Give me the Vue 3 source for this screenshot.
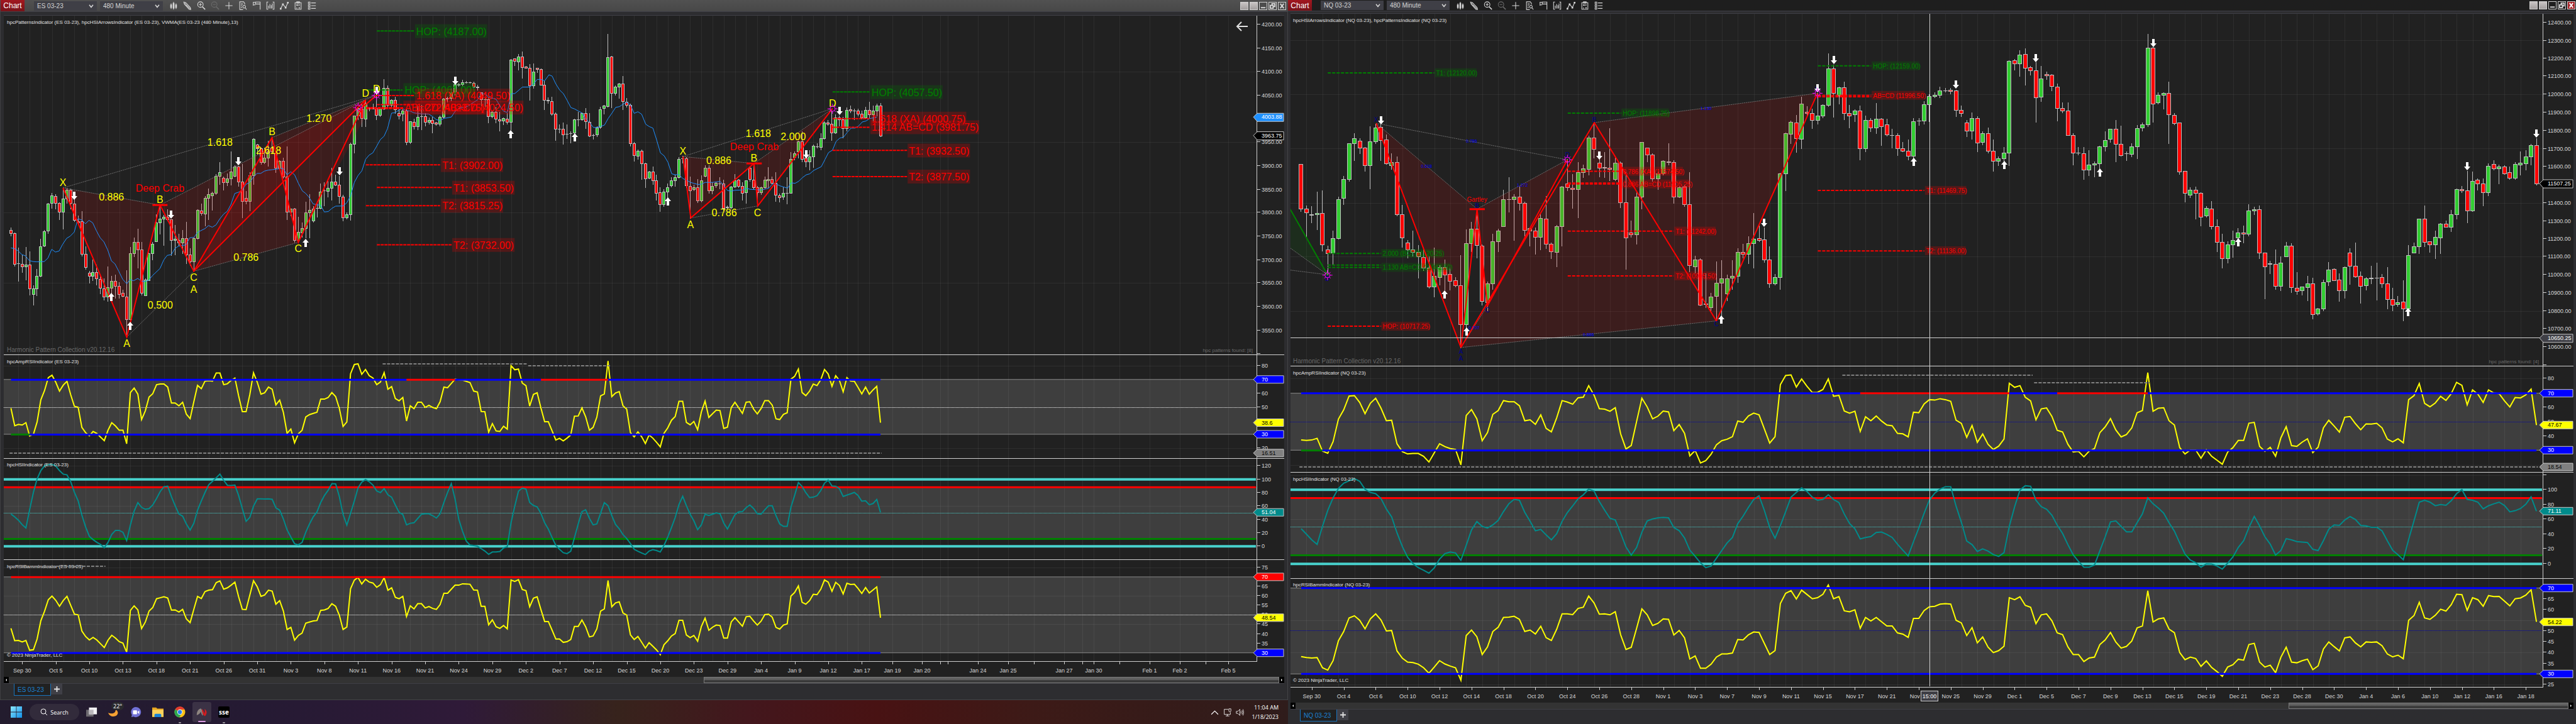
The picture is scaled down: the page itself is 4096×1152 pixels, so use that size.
<script setup>
// Horizontal and vertical plot units, in pixels.
const UX = 0.45918
const UY = 0.36735
const UL = 0.37755
const LOW = 560

const yTop = v => v * UY
const yLow = v => LOW + v * UL

// Bars: high open close low, as rows of the price plot.
const barsES = `985 996 1009 1022,1008 1009 1144 1151,1073 1140 1141 1216,1102 1144 1155 1178,1070 1155 1147 1212,1088 1147 1250 1278,1235 1275 1249 1320,1164 1249 1195 1280,1034 1195 1068 1197,996 1064 1002 1067,878 1000 881 1010,836 880 846 900,842 850 879 905,876 879 918 950,816 918 861 990,815 861 822 880,818 822 880 905,862 881 953 958,935 957 963 970,914 959 1100 1107,1068 1101 1157 1166,1173 1182 1194 1225,1125 1194 1179 1213,1145 1180 1205 1232,1186 1210 1248 1272,1207 1249 1284 1298,1155 1284 1244 1303,1195 1246 1217 1268,1190 1216 1238 1290,1221 1238 1275 1290,1255 1269 1283 1285,1170 1284 1382 1460,1070 1382 1096 1400,1028 1096 1049 1110,990 1049 1080 1160,1048 1081 1269 1278,1205 1279 1212 1280,1095 1213 1096 1214,1048 1096 1057 1125,927 1044 964 1045,888 963 948 1012,931 948 940 1063,906 940 950 955,950 951 1040 1105,975 1041 1035 1103,1012 1039 1052 1065,996 1052 1032 1096,960 1033 1103 1140,1075 1103 1133 1150,1030 1133 1033 1174,906 1032 910 1034,883 912 924 932,850 925 857 977,818 857 842 950,830 846 835 908,755 835 763 842,702 762 746 797,764 770 790 822,750 790 772 802,656 773 744 800,716 762 722 766,718 722 787 806,710 788 870 941,828 857 872 882,745 872 759 913,600 759 602 797,624 626 642 668,640 642 702 710,640 702 684 708,610 683 655 720,596 640 655 665,665 665 728 745,695 728 696 733,684 697 766 770,635 766 918 951,905 918 905 935,902 903 1040 1047,938 1040 1004 1050,965 1007 988 1026,875 988 920 1030,842 920 909 1028,893 955 903 960,872 901 902 938,795 901 829 903,790 826 825 890,784 827 813 853,728 813 787 865,756 787 800 803,762 800 850 878,845 851 942 956,920 942 927 948,617 927 624 953,500 624 502 662,462 502 468 517,450 470 513 546,432 515 447 546,465 469 470 480,450 469 470 472,404 468 497 516,462 497 470 504,344 470 382 473,370 382 455 462,430 455 432 466,418 432 475 490,470 490 500 515,465 493 480 522,475 478 616 625,525 616 526 622,515 527 546 558,460 546 506 560,455 504 503 562,490 504 529 545,510 529 519 537,505 519 533 575,527 532 537 542,500 537 506 545,425 506 428 512,418 426 427 440,385 426 400 435,362 398 366 410,360 367 366 372,346 364 356 370,350 357 356 360,353 356 357 360,355 358 376 378,368 376 378 390,400 400 430 457,424 430 429 460,422 430 504 530,478 504 485 510,462 485 515 532,485 516 524 565,510 524 513 538,490 514 528 535,256 528 258 562,252 254 265 283,235 267 245 302,224 245 290 338,285 288 293 295,277 293 369 433,275 369 310 380,293 295 299 312,298 299 367 368,352 367 434 475,422 434 436 446,418 437 493 497,488 493 559 607,540 559 559 575,530 559 583 623,540 580 581 600,570 578 577 617,515 574 517 578,485 518 516 544,487 517 491 519,468 491 525 555,490 527 588 590,580 584 584 602,548 583 552 590,462 550 473 556,455 469 458 492,148 459 247 462,242 246 404 466,370 402 376 410,358 376 362 424,330 363 437 474,425 440 454 462,450 454 621 632,616 621 672 697,648 675 652 690,648 653 707 776,705 707 774 810,740 770 744 772,722 742 780 797,757 780 835 866,810 833 886 914,820 885 831 893,795 831 811 860,768 804 781 808,758 780 767 805,680 768 688 771,676 687 687 705,680 687 804 810,765 805 825 945,800 820 812 825,775 811 868 876,760 868 781 875,716 761 726 765,716 726 826 835,790 826 807 838,790 804 792 812,768 794 795 818,778 795 900 912,890 896 897 905,805 898 809 905,755 809 781 811,775 778 807 812,790 807 835 865,782 834 782 878,720 726 776 785,708 778 811 816,805 811 833 890,808 832 811 842,765 811 778 815,725 780 775 812,765 776 791 797,747 791 845 872,838 846 855 875,810 853 837 862,768 835 836 882,658 835 689 836,655 680 663 692,610 655 612 684,568 612 689 700,660 684 699 722,650 700 679 736,625 679 632 723,622 633 635 640,577 637 600 647,525 598 530 602,521 530 537 543,480 537 574 608,495 574 508 577,500 508 517 545,505 518 554 595,465 554 476 565,457 473 479 486,472 478 479 518,472 478 493 500,478 493 510 515,463 508 476 512,442 477 496 510,456 496 478 523,450 478 458 500,446 458 587 590`
const barsNQ = `710 711 903 915,890 903 920 1030,893 932 927 965,830 927 922 993,825 924 1060 1087,1065 1080 1098 1190,1000 1095 1033 1145,853 1033 863 1035,763 857 776 884,620 776 622 783,577 622 600 695,600 611 639 664,638 639 717 740,548 717 612 818,536 612 552 622,540 550 606 694,583 604 709 710,663 717 702 733,678 702 927 935,888 927 1028 1070,1040 1051 1081 1115,1000 1081 1092 1107,1062 1092 1110 1203,1080 1113 1160 1170,1112 1161 1242 1248,1073 1242 1196 1285,1150 1200 1158 1232,1125 1158 1190 1255,1160 1188 1218 1255,1200 1214 1236 1242,1105 1236 1406 1505,993 1406 1053 1420,960 1053 992 1090,908 992 1063 1115,1060 1064 1303 1320,1220 1310 1229 1345,1012 1229 1046 1252,990 1046 998 1088,822 979 863 980,768 862 863 918,842 864 853 1040,808 853 879 908,875 879 996 1022,985 1000 988 1065,985 998 1027 1100,928 1027 945 1082,848 946 1057 1075,1050 1056 1090 1118,975 1092 981 1155,805 980 808 1065,690 796 812 825,755 813 820 902,703 820 745 942,712 747 730 768,587 731 596 758,532 596 646 684,690 704 728 764,660 725 727 768,556 727 733 780,684 776 704 780,700 704 877 898,745 877 1028 1165,955 1007 1016 1025,830 1016 853 1055,614 853 615 903,640 641 671 700,663 671 774 783,742 774 750 820,695 750 698 757,621 700 701 712,693 702 853 880,805 853 811 855,800 809 885 892,745 885 1149 1175,1108 1153 1123 1182,1120 1123 1319 1322,1185 1316 1318 1332,1268 1330 1284 1345,1132 1281 1224 1390,1126 1225 1205 1368,1190 1271 1205 1300,1127 1203 1194 1252,1076 1194 1092 1222,1056 1092 1099 1117,1024 1099 1053 1141,923 1053 1035 1161,978 1033 1041 1045,985 1038 1123 1134,1067 1123 1227 1244,1188 1229 1201 1234,748 1201 752 1253,575 751 576 825,522 580 528 620,498 530 600 660,420 602 450 642,460 484 489 504,470 489 521 555,403 521 502 535,453 502 454 509,231 454 297 461,280 297 404 506,377 415 378 448,353 378 491 517,455 490 500 553,475 496 480 525,457 480 643 692,500 643 519 657,511 519 552 568,446 552 515 578,512 515 548 628,514 539 583 589,558 585 586 640,577 585 643 673,615 643 653 657,603 652 676 692,512 676 526 685,513 523 524 542,437 524 452 535,407 452 417 525,399 417 410 422,375 411 393 421,381 391 392 398,382 388 394 405,390 393 476 504,457 476 489 503,519 532 566 592,488 566 511 602,503 511 617 656,568 615 577 627,552 577 652 661,605 652 698 740,678 698 687 715,638 687 662 700,261 661 263 715,255 260 276 303,218 276 236 329,209 234 293 368,285 291 304 323,270 304 421 527,285 420 339 439,311 321 326 342,322 325 374 392,361 376 467 523,445 468 480 488,443 480 585 586,577 585 661 712,638 661 662 670,638 663 735 775,651 735 713 760,700 713 709 766,632 709 635 730,568 635 606 653,557 602 559 616,520 559 624 700,544 624 672 674,655 664 665 695,621 666 635 677,541 635 554 685,531 552 539 567,146 539 208 548,203 208 448 528,399 443 412 448,399 411 402 472,355 402 495 622,490 499 533 538,530 532 744 755,740 741 837 875,810 843 822 856,808 822 835 947,833 835 940 976,893 934 902 940,870 903 981 992,950 981 1047 1089,1013 1049 1118 1159,1045 1118 1059 1139,1000 1060 1039 1113,987 1030 1007 1035,978 1007 1014 1050,886 1014 913 1021,895 911 907 928,891 907 1094 1119,1093 1094 1155 1294,1130 1141 1142 1183,1080 1144 1238 1252,1110 1238 1138 1257,1048 1110 1064 1112,1053 1064 1245 1267,1178 1247 1260 1274,1242 1259 1242 1276,1196 1243 1229 1300,1204 1229 1360 1381,1335 1358 1336 1365,1211 1336 1221 1345,1136 1219 1168 1237,1163 1164 1213 1215,1183 1212 1258 1304,1153 1258 1158 1289,1076 1094 1151 1230,1050 1151 1197 1200,1177 1194 1238 1312,1200 1237 1205 1254,1152 1204 1205 1228,1139 1203 1204 1298,1187 1201 1229 1244,1156 1227 1296 1337,1248 1295 1319 1344,1281 1317 1310 1326,1215 1308 1336 1387,1062 1336 1105 1340,1052 1093 1066 1095,947 1066 948 1098,890 948 1047 1067,1044 1046 1060 1092,1000 1060 1027 1119,966 1028 969 1098,955 969 982 984,908 983 927 1003,816 928 820 947,805 819 824 832,740 824 912 965,743 912 783 915,773 778 794 822,773 794 833 889,708 833 720 847,693 711 729 736,713 730 721 794,716 722 751 753,721 745 770 775,701 771 711 777,656 712 704 757,651 708 678 736,623 678 628 712,598 628 795 799`

const ampES = `237 311 305 308 298 354 347 295 202 162 108 98 128 165 140 124 180 229 233 318 340 353 335 343 359 374 330 298 312 330 330 387 171 152 178 285 248 190 176 138 135 135 148 215 215 227 212 262 281 210 141 155 123 121 123 89 89 138 134 120 110 185 252 252 180 88 128 178 172 148 157 223 203 255 343 325 383 345 330 274 264 259 254 199 199 192 171 188 238 314 295 92 53 50 94 74 100 110 138 127 87 157 146 196 206 192 291 227 239 212 212 234 225 234 239 210 148 151 133 115 118 119 124 129 165 169 251 252 338 302 333 335 313 325 58 75 72 131 142 228 179 172 235 294 294 332 371 364 375 363 350 271 270 236 273 330 318 275 185 177 38 188 173 167 227 241 340 358 337 357 386 350 363 381 400 343 320 288 272 208 208 297 307 293 328 253 207 276 260 245 247 322 317 235 212 235 259 212 210 241 261 239 205 205 224 282 285 263 256 115 103 72 171 184 165 135 142 117 74 93 145 100 120 168 108 123 124 150 177 148 178 160 145 298`
const hsiES = `683 695 709 728 742 665 592 535 500 480 475 474 481 500 515 518 547 592 628 688 737 777 791 802 811 825 803 769 752 752 760 795 730 671 635 655 663 660 645 618 588 568 566 610 648 683 692 725 751 722 667 628 592 560 545 530 515 541 562 563 561 605 660 714 697 650 619 619 620 619 621 657 667 704 750 780 808 813 803 760 725 695 674 635 605 583 555 556 610 685 730 680 628 573 549 538 547 561 586 593 576 602 612 645 676 685 729 722 720 702 684 682 682 690 700 682 635 592 555 620 705 755 797 814 816 819 829 839 853 843 843 841 826 821 720 650 587 574 578 634 647 653 680 720 747 782 815 832 846 850 840 783 725 673 665 701 729 725 680 635 648 690 727 745 770 786 807 832 840 847 854 839 833 837 843 815 780 740 698 643 608 648 684 712 749 729 684 689 684 678 682 721 746 716 686 674 673 656 645 660 682 684 665 648 648 690 725 735 735 655 605 550 567 593 614 612 606 584 553 540 565 566 576 609 603 598 592 605 629 627 644 639 622 676`
const bammES = `1165 1217 1216 1222 1216 1257 1255 1210 1133 1092 1044 1029 1047 1072 1048 1030 1068 1105 1108 1176 1199 1214 1203 1214 1230 1246 1215 1194 1206 1221 1227 1266 1090 1070 1087 1166 1138 1092 1077 1040 1036 1032 1037 1088 1087 1096 1085 1125 1141 1085 1030 1039 1010 1004 1002 972 965 1000 994 983 970 1032 1085 1086 1025 964 990 1030 1024 1004 1008 1063 1048 1092 1170 1161 1215 1195 1185 1143 1138 1134 1132 1089 1087 1081 1061 1072 1110 1170 1159 998 962 950 978 958 970 974 992 981 951 1004 994 1034 1040 1030 1115 1070 1083 1061 1061 1079 1073 1081 1085 1065 1017 1017 1000 983 983 977 978 979 1003 1004 1072 1072 1150 1129 1158 1165 1153 1167 961 967 960 1001 1006 1074 1038 1032 1085 1136 1136 1172 1210 1210 1224 1221 1212 1157 1157 1130 1158 1201 1197 1167 1092 1083 963 1074 1058 1053 1100 1109 1192 1212 1199 1223 1248 1225 1240 1256 1276 1234 1217 1197 1187 1131 1131 1193 1204 1195 1219 1157 1122 1173 1160 1151 1153 1206 1206 1138 1120 1138 1156 1116 1114 1134 1151 1135 1107 1105 1118 1161 1168 1151 1146 1029 1014 986 1055 1063 1048 1021 1023 1000 961 970 1009 971 984 1020 975 980 979 997 1018 993 1016 1003 990 1120`
const ampNQ = `371 373 371 364 418 427 378 283 244 186 184 213 260 216 195 237 290 288 387 420 430 428 428 440 464 425 387 399 407 411 476 268 243 282 374 340 263 247 205 210 210 227 290 286 305 265 322 337 277 205 211 220 193 191 142 182 239 241 250 235 345 409 394 293 195 232 282 271 249 253 332 306 343 438 415 468 458 431 391 374 368 357 291 296 270 258 265 325 384 357 138 99 97 148 114 145 171 170 158 114 187 183 249 258 250 335 273 290 270 291 308 311 343 345 358 254 256 219 201 203 197 201 208 288 301 360 310 381 346 389 411 397 367 132 149 142 191 206 286 240 236 272 330 337 389 422 419 442 418 407 340 316 281 329 358 348 320 256 247 87 250 237 235 290 308 403 430 413 413 448 412 440 456 473 422 403 373 373 300 297 398 419 402 440 362 315 395 398 380 366 424 401 320 288 312 338 275 272 302 328 303 304 301 320 367 379 366 383 201 184 133 217 231 215 187 204 176 128 141 223 160 178 213 160 173 176 206 232 192 194 181 157 308`
const hsiNQ = `745 768 792 811 735 668 615 575 553 543 534 545 579 592 597 618 662 695 762 820 865 892 909 920 932 910 873 850 843 847 878 815 750 715 735 742 729 710 673 640 621 625 676 714 754 748 771 792 766 714 677 649 619 602 578 586 630 667 701 708 763 822 856 824 760 712 704 699 697 699 740 753 784 835 861 889 909 902 869 837 805 782 724 692 655 622 606 668 740 785 732 673 612 592 573 588 612 625 621 602 622 635 683 723 745 788 782 778 761 759 769 782 810 835 860 800 742 680 624 595 578 568 568 650 718 797 812 841 830 839 854 862 846 735 652 582 564 566 625 652 663 688 730 765 812 855 883 907 907 898 838 780 716 712 735 758 758 720 682 615 640 658 680 720 755 805 852 877 888 907 893 894 902 915 890 864 824 796 740 693 733 779 810 856 837 787 792 799 801 803 832 837 795 747 729 731 708 694 706 731 733 739 739 754 796 836 855 876 790 712 633 625 633 648 643 646 627 597 580 621 625 633 661 648 640 633 647 674 669 660 642 611 671`
const bammNQ = `1284 1288 1290 1288 1331 1341 1301 1217 1178 1121 1112 1131 1167 1125 1104 1130 1176 1174 1260 1291 1307 1309 1316 1331 1354 1328 1301 1315 1324 1331 1384 1195 1172 1200 1275 1243 1178 1160 1119 1118 1114 1127 1178 1172 1189 1156 1204 1216 1168 1104 1104 1107 1081 1076 1029 1058 1105 1104 1108 1095 1192 1254 1245 1165 1083 1108 1153 1144 1125 1127 1193 1174 1205 1294 1281 1333 1333 1316 1286 1273 1273 1269 1212 1214 1192 1180 1182 1229 1275 1259 1060 1017 1006 1041 1004 1022 1040 1036 1021 982 1040 1031 1091 1095 1087 1165 1119 1134 1119 1137 1155 1155 1184 1189 1203 1123 1123 1090 1074 1072 1063 1061 1063 1131 1142 1195 1162 1226 1201 1244 1267 1259 1240 1036 1044 1032 1068 1076 1145 1108 1104 1133 1184 1191 1243 1275 1275 1305 1290 1286 1233 1214 1182 1223 1248 1241 1218 1163 1155 1006 1138 1125 1121 1168 1183 1267 1297 1286 1292 1325 1302 1330 1347 1367 1328 1318 1295 1299 1233 1228 1307 1328 1320 1352 1287 1244 1307 1310 1301 1295 1339 1323 1252 1222 1242 1260 1205 1201 1226 1243 1222 1224 1222 1238 1273 1285 1278 1293 1131 1111 1055 1121 1127 1110 1084 1092 1065 1021 1023 1089 1036 1044 1072 1027 1031 1030 1050 1070 1040 1037 1025 1002 1137`

// Moving average, as x y pairs.
const vwma = `38 1074 50 1077 62 1086 76 1103 88 1108 101 1128 114 1133 127 1134 153 1133 166 1118 179 1080 192 1092 205 1087 217 1058 231 1032 243 1023 257 1005 270 947 283 953 296 969 308 954 321 965 334 1000 347 1030 360 1048 373 1083 386 1130 398 1143 411 1174 425 1210 439 1229 450 1211 463 1216 477 1206 489 1217 502 1219 515 1214 528 1194 554 1163 567 1126 579 1106 593 1103 606 1076 618 1066 631 1063 644 1061 657 1030 672 1028 684 1006 710 990 722 977 735 984 748 974 760 950 774 928 787 915 800 885 813 838 825 833 838 825 851 799 865 790 877 768 890 751 903 751 916 741 929 737 942 735 980 729 994 757 1007 744 1020 757 1033 793 1047 827 1058 837 1070 854 1084 883 1097 887 1110 889 1123 918 1137 916 1149 903 1162 893 1188 892 1201 878 1214 848 1227 790 1240 760 1253 740 1266 690 1278 672 1291 662 1304 634 1317 605 1330 590 1342 557 1356 490 1368 488 1382 476 1394 470 1407 479 1420 481 1433 489 1459 493 1485 494 1498 505 1511 518 1523 522 1537 513 1563 507 1576 482 1589 469 1615 463 1628 453 1654 432 1666 406 1679 406 1692 420 1718 430 1731 458 1744 482 1757 487 1770 406 1783 405 1809 377 1833 377 1847 365 1860 344 1873 344 1886 350 1901 324 1912 330 1924 362 1938 390 1951 406 1964 435 1977 466 1990 472 2003 481 2015 489 2028 514 2041 530 2055 552 2067 552 2081 547 2093 542 2106 513 2119 490 2132 465 2145 462 2158 451 2170 443 2183 454 2196 491 2209 484 2222 495 2236 538 2248 548 2261 555 2274 607 2287 662 2300 675 2313 703 2326 753 2339 757 2351 756 2365 774 2377 780 2391 790 2417 799 2429 798 2442 790 2468 790 2494 786 2506 803 2519 825 2532 828 2545 824 2571 823 2584 815 2597 820 2636 823 2662 815 2675 797 2688 797 2701 805 2727 815 2740 792 2753 794 2766 785 2778 770 2792 757 2804 753 2818 738 2844 722 2857 690 2869 661 2883 650 2895 613 2908 598 2921 594 2934 573 2947 555 2960 555 2973 546 2986 528 2999 524 3011 514 3037 507`

const nums = s => s.trim().split(/\s+/).map(Number)
const range = (from, to, step) => {
  const out = []
  for (let i = from; i <= to; i += step) out.push(i)
  return out
}

function buildCandles(src, barX, half) {
  let wicks = ''
  let up = ''
  let down = ''
  src.split(',').forEach((row, i) => {
    const [h, o, c, l] = nums(row).map(v => Math.round(yTop(v)))
    const x = Math.round(barX(i) - 0.5)
    const top = Math.min(o, c)
    const bottom = Math.max(o, c)
    if (bottom - top < 1) {
      wicks += `M${x + 0.5} ${h}V${l + 1}M${x - half} ${top + 0.5}h${half * 2 + 1}`
      return
    }
    wicks += `M${x + 0.5} ${h}V${top}M${x + 0.5} ${bottom}V${l + 1}`
    const box = `M${x - half + 0.5} ${top + 0.5}h${half * 2}V${bottom + 0.5}h${-half * 2}z`
    if (c < o) up += box
    else down += box
  })
  return { wicks, up, down }
}

const price = list => list.map(([t, y, kind]) => ({ t, y: yTop(y), kind }))
const scale = list => list.map(([t, y, kind]) => ({ t, y: yLow(y), kind }))

function makeChart(c) {
  const X = v => c.base + v * UX
  const barX = i => c.first + i * c.pitch
  const P = ([x, y]) => `${X(x).toFixed(1)},${yTop(y).toFixed(1)}`
  const poly = pts => pts.map(P).join(' ')
  const series = s => nums(s).map((v, i) => `${barX(i).toFixed(1)},${yLow(v).toFixed(1)}`).join(' ')
  const b = c.bounds
  const box = i => `${c.left} ${b[i]} ${c.right - c.left} ${b[i + 1] - b[i]}`
  return {
    ...c,
    boxes: [0, 1, 2, 3, 4].map(box),
    candles: buildCandles(c.bars, barX, c.half),
    gridX: [...range(c.gridFrom, c.gridTo, 3).map(i => Math.round(barX(i))), ...(c.extra || [])],
    priceGrid: c.priceRows.map(y => Math.round(yTop(y))),
    priceAxis: price(c.priceLabels),
    fills: c.fills.map(f => ({ kind: f[0], pts: poly(f[1]) })),
    legs: c.legs.map(f => ({ kind: f[0], pts: poly(f[1]) })),
    links: c.links.map(poly),
    bars3: c.markers.map(([x1, x2, y]) => ({ x1: X(x1), x2: X(x2), y: yTop(y) })),
    stars: c.stars.map(([x, y]) => ({ x: X(x), y: yTop(y) })),
    arrows: c.arrows.map(([d, x, y]) => {
      const s = d === 'd' ? -1 : 1
      const ax = Math.round(X(x))
      const ay = Math.round(yTop(y))
      return `M${ax} ${ay}l5 ${6 * s}h-3v${7 * s}h-4v${-7 * s}h-3z`
    }),
    notes: c.notes.map(([t, x, y, kind]) => ({ t, kind, x: X(x), y: yTop(y) + (kind === 'point' || kind === 'name' ? c.noteDrop : 3) })),
    levels: c.levels.map(([kind, x1, x2, y, t, bx1, bx2, by]) => ({
      kind, t, x1: X(x1), x2: X(x2), y: yTop(y),
      bx: bx1 && X(bx1), bw: bx1 && X(bx2) - X(bx1), by: yTop(by ?? y)
    })),
    average: c.average && (() => {
      const n = nums(c.average)
      const pts = []
      for (let i = 0; i < n.length; i += 2) pts.push([n[i], n[i + 1]])
      return poly(pts)
    })(),
    panes: c.panes.map((p, i) => ({
      ...p,
      box: box(i + 1),
      top: b[i + 1],
      bottom: b[i + 2],
      titleY: yLow(p.titleRow) + 3,
      line: series(p.data),
      grid: p.rows.map(y => Math.round(yLow(y))),
      band: p.band.map(yLow),
      mid: Math.round(yLow(p.mid)) + 0.5,
      rules: p.rules.map(([kind, y, from, to]) => ({
        kind, y: yLow(y),
        x1: from === undefined ? c.left : barX(from),
        x2: to === undefined ? c.axis - 2 : barX(to)
      })),
      dashes: p.dashes.map(([y, x1, x2]) => ({ y: Math.round(yLow(y)), x1: X(x1), x2: X(x2) })),
      axisLabels: scale(p.labels)
    })),
    dates: c.dateNames.map((t, i) => ({ t, x: barX(c.dateFrom + i * c.dateStep) })).concat(c.laterDates || [])
  }
}

const es = makeChart({
  id: 'es', symbol: 'ES 03-23', base: 0, left: 6, right: 2042, axis: 1999,
  first: 17.45, pitch: 5.9337, half: 2, bounds: [25, 565, 730, 891, 1053, 1077],
  bars: barsES, average: vwma, noteDrop: 6,
  title: 'hpcPatternsIndicator (ES 03-23), hpcHSIArrowsIndicator (ES 03-23), VWMA(ES 03-23 (480 Minute),13)',
  titleX: 11, titleY: 38, footY: 560, found: 'hpc patterns found: [8]', foundX: 1992,
  copyY: 1045,
  gridFrom: 2, gridTo: 230, extra: [1419, 1466, 1495, 1507, 1555, 1603, 1644, 1692, 1721, 1739, 1780, 1828, 1876, 1917, 1953],
  priceRows: [310, 615, 920, 1225, 1532],
  priceLabels: [['4200.00', 107], ['4150.00', 209], ['4100.00', 311], ['4050.00', 413], ['3950.00', 616], ['3900.00', 718], ['3850.00', 821], ['3800.00', 921], ['3750.00', 1023], ['3700.00', 1126], ['3650.00', 1226], ['3600.00', 1328], ['3550.00', 1431], ['', 1532], ['4003.88', 507, 'sky'], ['3963.75', 587, 'black']],
  fills: [
    ['red', [[218, 814], [439, 1460], [554, 888]]],
    ['red', [[554, 888], [671, 1175], [1266, 430]]],
    ['red', [[671, 1175], [942, 596], [1033, 1050]]],
    ['red', [[942, 596], [1033, 1050], [1304, 412]]],
    ['red', [[2365, 678], [2392, 944], [2611, 708]]],
    ['red', [[2611, 708], [2624, 892], [2883, 470]]]
  ],
  legs: [
    ['red', [[218, 814], [439, 1460], [554, 888], [671, 1175], [1266, 432]]],
    ['red', [[671, 1175], [942, 596], [1033, 1050], [1266, 435]]],
    ['red', [[1240, 482], [1304, 412]]],
    ['red', [[2365, 678], [2392, 944], [2611, 708], [2624, 892], [2883, 470]]]
  ],
  links: [
    [[218, 814], [554, 888]], [[218, 814], [1304, 412]], [[554, 888], [1266, 432]], [[439, 1460], [671, 1175]],
    [[671, 1175], [1033, 1050]], [[942, 596], [1304, 412]],
    [[2365, 678], [2611, 708]], [[2365, 678], [2883, 470]], [[2611, 708], [2883, 470]], [[2392, 944], [2624, 892]]
  ],
  markers: [[528, 580, 888], [2585, 2638, 708]],
  stars: [[1240, 466], [1304, 413], [2883, 471]],
  arrows: [
    ['d', 257, 865], ['d', 593, 947], ['d', 825, 716], ['d', 1175, 760], ['d', 1304, 410], ['u', 386, 1268], ['u', 450, 1393], ['u', 1058, 1034],
    ['d', 1576, 367], ['d', 2908, 497], ['d', 2792, 686], ['u', 1769, 563], ['u', 1990, 576], ['u', 2313, 855]
  ],
  notes: [
    ['X', 218, 790, 'point'], ['B', 554, 864, 'point'], ['C', 671, 1201, 'point'], ['A', 671, 1252, 'point'], ['A', 439, 1487, 'point'],
    ['B', 942, 570, 'point'], ['C', 1033, 1075, 'point'], ['D', 1266, 402, 'point'], ['D', 1304, 385, 'point'],
    ['0.886', 386, 852, 'point'], ['1.618', 762, 614, 'point'], ['1.270', 1105, 511, 'point'], ['2.618', 930, 651, 'point'],
    ['0.786', 852, 1113, 'point'], ['0.500', 555, 1319, 'point'], ['Deep Crab', 554, 815, 'name'],
    ['X', 2365, 652, 'point'], ['B', 2611, 684, 'point'], ['A', 2391, 972, 'point'], ['C', 2623, 919, 'point'], ['D', 2883, 446, 'point'],
    ['1.618', 2626, 576, 'point'], ['2.000', 2747, 590, 'point'], ['0.886', 2489, 693, 'point'], ['0.786', 2508, 920, 'point'], ['Deep Crab', 2612, 634, 'name']
  ],
  levels: [
    ['green', 1305, 1434, 134, 'HOP: (4187.00)', 1437, 1687, 135],
    ['green', 1270, 1394, 390, 'HOP: (4061.00)', 1397, 1646, 390],
    ['red', 1305, 1434, 414, '1.618 (XA) (4049.50)', 1437, 1768, 414],
    ['red', 1305, 1434, 453, '1.272 AB=CD (4024.50)', 1437, 1813, 466],
    ['red', 1268, 1396, 466, 'AB=CD (4023.75)', 1397, 1680, 466],
    ['red', 1268, 1396, 470],
    ['red', 1267, 1524, 714, 'T1: (3902.00)', 1527, 1742, 715],
    ['red', 1305, 1564, 812, 'T1: (3853.50)', 1566, 1782, 813],
    ['red', 1267, 1524, 891, 'T2: (3815.25)', 1527, 1742, 891],
    ['red', 1305, 1564, 1060, 'T2: (3732.00)', 1566, 1782, 1061],
    ['green', 2883, 3011, 398, 'HOP: (4057.50)', 3014, 3264, 399],
    ['red', 2883, 3011, 514, '1.618 (XA) (4000.75)', 3014, 3346, 514],
    ['red', 2883, 3011, 551, '1.414 AB=CD (3981.75)', 3014, 3391, 551],
    ['red', 2883, 3141, 651, 'T1: (3932.50)', 3143, 3359, 652],
    ['red', 2883, 3141, 765, 'T2: (3877.50)', 3143, 3359, 765]
  ],
  panes: [
    {
      title: 'hpcAmpRSIIndicator (ES 03-23)', titleRow: 39, data: ampES, tone: 'yellow', under: true, rows: [58, 406], band: [116, 347], mid: 232, midKind: 'white',
      rules: [['gray', 116], ['gray', 347], ['blue', 117, 0, 106], ['red', 117, 106, 119], ['blue', 117, 119, 142], ['red', 117, 142, 160], ['blue', 117, 160, 233], ['green', 348, 0, 5], ['blue', 348, 5, 233]],
      dashes: [[51, 1325, 1825], [57, 1829, 2112], [426, 33, 3053]],
      labels: [['80', 59], ['60', 175], ['50', 232], ['20', 406], ['70', 116, 'blue'], ['38.6', 298, 'yellow'], ['30', 347, 'blue'], ['16.51', 426, 'gray']]
    },
    {
      title: 'hpcHSIIndicator (ES 03-23)', titleRow: 475, data: hsiES, tone: 'teal', rows: [480, 650], band: [570, 788], mid: 679, midKind: 'aqua',
      rules: [['aqua', 537], ['red', 570], ['green', 788], ['aqua', 819]], dashes: [],
      labels: [['120', 480], ['100', 537], ['80', 594], ['60', 650], ['40', 707], ['20', 762], ['0', 819], ['51.04', 676, 'teal']]
    },
    {
      title: 'hpcRSIBammIndicator (ES 03-23)', titleRow: 903, data: bammES, tone: 'yellow', under: true, rows: [908, 1027, 1147], band: [948, 1268], mid: 1107, midKind: 'white',
      rules: [['gray', 948], ['gray', 1268], ['red', 949, 0, 233], ['blue', 1269, 0, 233]], dashes: [[903, 26, 365]],
      labels: [['75', 908], ['65', 987], ['60', 1027], ['55', 1067], ['50', 1107], ['45', 1148], ['40', 1188], ['35', 1228], ['70', 948, 'red'], ['48.54', 1120, 'yellow'], ['30', 1268, 'blue']]
    }
  ],
  dateFrom: 3, dateStep: 9,
  dateNames: ['Sep 30', 'Oct 5', 'Oct 10', 'Oct 13', 'Oct 18', 'Oct 21', 'Oct 26', 'Oct 31', 'Nov 3', 'Nov 8', 'Nov 11', 'Nov 16', 'Nov 21', 'Nov 24', 'Nov 29', 'Dec 2', 'Dec 7', 'Dec 12', 'Dec 15', 'Dec 20', 'Dec 23', 'Dec 29', 'Jan 4', 'Jan 9', 'Jan 12', 'Jan 17'],
  laterDates: [
    { t: 'Jan 19', x: 1419 }, { t: 'Jan 20', x: 1466 }, { t: '', x: 1495 }, { t: '', x: 1507 }, { t: 'Jan 24', x: 1555 }, { t: 'Jan 25', x: 1603 }, { t: '', x: 1644 }, { t: 'Jan 27', x: 1692 },
    { t: '', x: 1721 }, { t: 'Jan 30', x: 1739 }, { t: '', x: 1780 }, { t: 'Feb 1', x: 1828 }, { t: 'Feb 2', x: 1876 }, { t: '', x: 1917 }, { t: 'Feb 5', x: 1953 }
  ]
})

const nq = makeChart({
  id: 'nq', symbol: 'NQ 03-23', base: -8, left: 4, right: 2044, axis: 1996,
  first: 20.9, pitch: 8.4664, half: 3, bounds: [22, 583, 752, 921, 1094, 1118],
  bars: barsNQ, noteDrop: 4,
  title: 'hpcHSIArrowsIndicator (NQ 03-23), hpcPatternsIndicator (NQ 03-23)',
  titleX: 8, titleY: 35, footY: 578, found: 'hpc patterns found: [4]', foundX: 1989,
  copyY: 1085, crossX: 1020, crossY: 538,
  gridFrom: 1, gridTo: 229,
  priceRows: [175, 408, 643, 879, 1112, 1347, 1581],
  priceLabels: [['12400.00', 98], ['12300.00', 176], ['12200.00', 252], ['12100.00', 330], ['12000.00', 409], ['11900.00', 487], ['11800.00', 566], ['11700.00', 644], ['11600.00', 722], ['11400.00', 879], ['11300.00', 957], ['11200.00', 1035], ['11100.00', 1112], ['11000.00', 1190], ['10900.00', 1269], ['10800.00', 1347], ['10700.00', 1425], ['10600.00', 1504], ['', 1581], ['11507.25', 795, 'black'], ['10650.25', 1464, 'slate']],
  fills: [
    ['green', [[26, 908], [154, 1190], [26, 1075]]],
    ['red', [[323, 534], [616, 1505], [672, 905]]],
    ['red', [[672, 905], [708, 1325], [985, 692]]],
    ['red', [[616, 1505], [1078, 531], [1851, 404], [1501, 1390]]]
  ],
  legs: [
    ['green', [[20, 895], [154, 1190]]],
    ['red', [[323, 534], [616, 1505], [672, 905], [708, 1325], [985, 692]]],
    ['red', [[616, 1505], [1078, 531], [1501, 1390], [1851, 404]]]
  ],
  links: [
    [[26, 1075], [154, 1190]], [[26, 1170], [154, 1190]], [[323, 534], [672, 905]], [[323, 534], [985, 692]], [[672, 905], [985, 692]],
    [[616, 1505], [708, 1325]], [[1078, 531], [1851, 404]], [[616, 1505], [1501, 1390]]
  ],
  markers: [[646, 699, 906]],
  stars: [[154, 1192], [985, 692], [1851, 404]],
  arrows: [
    ['d', 339, 540], ['d', 1095, 692], ['u', 560, 1257], ['u', 635, 1419], ['u', 1519, 1367],
    ['d', 1851, 400], ['d', 1907, 279], ['d', 1666, 984], ['d', 2330, 385], ['d', 2607, 270], ['d', 3013, 203], ['u', 2184, 682], ['u', 2497, 698], ['u', 2829, 730],
    ['d', 4340, 597], ['d', 4101, 739], ['u', 3307, 1032], ['u', 3897, 1335]
  ],
  notes: [
    ['X', 322, 517, 'point'], ['A', 616, 1521, 'point'], ['A', 616, 1552, 'point'], ['B', 672, 890, 'point'], ['C', 708, 1342, 'point'], ['D', 985, 670, 'point'],
    ['B', 1078, 516, 'point'], ['C', 1501, 1403, 'point'], ['D', 154, 1207, 'point'], ['D', 1851, 386, 'point'], ['Gartley', 672, 862, 'name'],
    ['0.786', 653, 611, 'ratio'], ['0.618', 497, 720, 'ratio'], ['1.272', 829, 799, 'ratio'], ['0.707', 662, 1417, 'ratio'], ['0.886', 1058, 1448, 'ratio'], ['1.130', 1465, 468, 'ratio']
  ],
  levels: [
    ['green', 155, 524, 316, 'T1: (12120.00)', 526, 670, 315],
    ['green', 155, 340, 1098, '2.000 (BC) (11120.25)', 341, 552, 1097],
    ['green', 155, 340, 1148],
    ['green', 155, 340, 1158, '1.130 AB=CD (11042.50)', 341, 580, 1158],
    ['red', 155, 340, 1413, 'HOP: (10717.25)', 341, 507, 1413],
    ['green', 986, 1171, 490, 'HOP: (11898.25)', 1172, 1336, 489],
    ['red', 986, 1163, 742, '0.786 (XA) (11574.50)', 1172, 1385, 742],
    ['red', 986, 1163, 793], ['red', 986, 1163, 797, '0.886 AB=CD (11505.25)', 1172, 1411, 797],
    ['red', 986, 1353, 1001, 'T1: (11242.00)', 1355, 1498, 1001],
    ['red', 986, 1353, 1195, 'T2: (10995.50)', 1355, 1498, 1195],
    ['green', 1852, 2037, 285, 'HOP: (12159.00)', 2039, 2203, 285],
    ['red', 1852, 2037, 413, 'AB=CD (11996.50)', 2039, 2221, 413],
    ['red', 1852, 2037, 419],
    ['red', 1852, 2221, 825, 'T1: (11469.75)', 2223, 2366, 825],
    ['red', 1852, 2221, 1087, 'T2: (11136.00)', 2223, 2364, 1086]
  ],
  panes: [
    {
      title: 'hpcAmpRSIIndicator (NQ 03-23)', titleRow: 88, data: ampNQ, tone: 'yellow', under: true, rows: [110, 476], band: [174, 414], mid: 293, midKind: 'navy',
      rules: [['gray', 174], ['gray', 414], ['blue', 174, 0, 105], ['red', 174, 105, 133], ['blue', 174, 133, 142], ['red', 174, 142, 159], ['blue', 174, 159, 232], ['green', 415, 0, 4], ['blue', 415, 4, 232]],
      dashes: [[97, 1937, 2596], [131, 2601, 3001], [485, 57, 4346]],
      labels: [['80', 112], ['60', 233], ['50', 293], ['40', 355], ['70', 174, 'blue'], ['47.67', 308, 'yellow'], ['30', 414, 'blue'], ['18.54', 485, 'gray']]
    },
    {
      title: 'hpcHSIIndicator (NQ 03-23)', titleRow: 535, data: hsiNQ, tone: 'teal', rows: [518, 705], band: [616, 857], mid: 736, midKind: 'aqua',
      rules: [['aqua', 581], ['red', 616], ['green', 857], ['aqua', 893]], dashes: [],
      labels: [['', 518], ['100', 581], ['80', 644], ['60', 705], ['40', 768], ['20', 830], ['0', 893], ['71.11', 671, 'teal']]
    },
    {
      title: 'hpcRSIBammIndicator (NQ 03-23)', titleRow: 981, data: bammNQ, tone: 'yellow', under: true, rows: [1131, 1266, 1402], band: [995, 1357], mid: 1174, midKind: 'navy',
      rules: [['gray', 995], ['gray', 1357], ['blue', 995, 0, 232], ['blue', 1357, 0, 232]], dashes: [],
      labels: [['65', 1040], ['60', 1086], ['50', 1175], ['45', 1221], ['40', 1266], ['35', 1313], ['25', 1402], ['70', 995, 'blue'], ['54.22', 1138, 'yellow'], ['30', 1357, 'blue']]
    }
  ],
  dateFrom: 2, dateStep: 6,
  dateNames: ['Sep 30', 'Oct 4', 'Oct 6', 'Oct 10', 'Oct 12', 'Oct 14', 'Oct 18', 'Oct 20', 'Oct 24', 'Oct 26', 'Oct 28', 'Nov 1', 'Nov 3', 'Nov 7', 'Nov 9', 'Nov 11', 'Nov 15', 'Nov 17', 'Nov 21', 'Nov 23', 'Nov 25', 'Nov 29', 'Dec 1', 'Dec 5', 'Dec 7', 'Dec 9', 'Dec 13', 'Dec 15', 'Dec 19', 'Dec 21', 'Dec 23', 'Dec 28', 'Dec 30', 'Jan 4', 'Jan 6', 'Jan 10', 'Jan 12', 'Jan 16', 'Jan 18']
})

const charts = [es, nq]

const tools = [
  { name: 'Bar type', line: 'M3.500 4v10M8 1v14M12.500 4v10', solid: 'M2 6h3v6H2zM6.500 3h3v10h-3zM11 6h3v6h-3z' },
  { name: 'Drawing tools', line: 'M1.500 1.500l1 3.500 8.500 9.500 3 .5-.5-3L5 2.500zM3 5l2-2M5 5.500l7 7.500M6.500 4l7 7.500', solid: 'M11 14l3 1-.5-3z' },
  { name: 'Zoom in', line: 'M6.500 1a5 5 0 1 0 0 10a5 5 0 1 0 0-10M4 6h5M6.500 3.500v5M10 10l5 5', solid: 'M10.500 9.500l5 4.500-1 1.500-5-5z' },
  { name: 'Zoom out', dim: true, line: 'M6.500 1a5 5 0 1 0 0 10a5 5 0 1 0 0-10M4 6h5M10 10l5 5', solid: 'M10.500 9.500l5 4.500-1 1.500-5-5z' },
  { name: 'Crosshair', line: 'M8 1.500v13M1.500 8h13', solid: '' },
  { name: 'Data box', line: 'M11.500 6V3.500L9.500 1h-7v14h6M4.500 5h4M4.500 8h2.500M4.500 11h2M10.500 7.500a2.500 2.500 0 1 0 .1 0M12.500 12l2.500 3', solid: '' },
  { name: 'Chart trader', line: 'M2 1v7M2 2h4M2 6.500h4M6 1.500h8.500V5H6zM14.500 5v10', solid: '' },
  { name: 'Indicators', line: 'M4 1.500H1.500v13H4M12 1.500h2.500v13H12M4.500 8v5M7 5v8M9.500 7v6M11.500 4v9', solid: '' },
  { name: 'Strategies', line: 'M1.500 13.500l4-8 5 6 4-9', solid: 'M0 12h3v3H0zM4 4h3v3H4zM9 10h3v3H9zM13 1h3v3h-3z' },
  { name: 'Properties', line: 'M2.500 2.500h11v12h-11zM5.500 1h5v2.500h-5zM5 6l2.500 2M7.500 6L5 8M9 11l2.500 2M11.500 11L9 13M9 8c0-2 2-2 2-.5M5.500 11v2.500', solid: '' },
  { name: 'More', line: 'M6.500 3H15M6.500 8H15M6.500 13H15M1.500 1.500h3v3h-3zM1.500 6.500h3v3h-3zM1.500 11.500h3v3h-3z', solid: '' }
]
</script>

<template>
  <div class="desktop">
    <div v-for="c in charts" :key="c.id" class="side">
      <section class="window" :class="c.id">
        <header class="toolbar">
          <h1 class="brand">Chart</h1>
          <label class="pick">
            <select aria-label="Instrument"><option>{{ c.symbol }}</option></select>
            <svg viewBox="0 0 10 8" aria-hidden="true"><path d="M1 1l4 5 4-5" /></svg>
          </label>
          <label class="pick">
            <select aria-label="Interval"><option>480 Minute</option></select>
            <svg viewBox="0 0 10 8" aria-hidden="true"><path d="M1 1l4 5 4-5" /></svg>
          </label>
          <nav class="tools">
            <button v-for="t in tools" :key="t.name" :aria-label="t.name" :class="{ dim: t.dim }">
              <svg viewBox="0 0 16 16"><path class="ln" :d="t.line" /><path class="sd" :d="t.solid" /></svg>
            </button>
          </nav>
          <div class="controls">
            <button class="blank" aria-label="Link instrument"></button>
            <button class="blank" aria-label="Link interval"></button>
            <button aria-label="Minimize"><svg viewBox="0 0 12 12"><path d="M2 9h8" /></svg></button>
            <button aria-label="Restore"><svg viewBox="0 0 12 12"><path d="M5 5V2h5v5H7M2 5h5v5H2z" /></svg></button>
            <button class="close" aria-label="Close"><svg viewBox="0 0 12 12"><path d="M3 2l6 8M9 2l-6 8" /></svg></button>
          </div>
        </header>

        <div class="frame">
          <svg class="pane" :viewBox="c.boxes[0]">
            <g class="grid">
              <path v-for="x in c.gridX" :key="'x' + x" :d="`M${x + 0.5} ${c.bounds[0]}V${c.bounds[1]}`" />
              <path v-for="y in c.priceGrid" :key="'y' + y" :d="`M${c.left} ${y + 0.5}H${c.axis}`" />
            </g>
            <text class="label" :x="c.titleX" :y="c.titleY">{{ c.title }}</text>
            <text class="faint large" :x="c.titleX" :y="c.footY">Harmonic Pattern Collection v20.12.16</text>
            <text class="faint end" :x="c.foundX" :y="c.footY">{{ c.found }}</text>
            <path class="wick" :d="c.candles.wicks" />
            <path class="up" :d="c.candles.up" />
            <path class="down" :d="c.candles.down" />
            <polygon v-for="(f, i) in c.fills" :key="'f' + i" class="fill" :class="f.kind" :points="f.pts" />
            <polyline v-if="c.average" class="average" :points="c.average" />
            <polyline v-for="(l, i) in c.links" :key="'k' + i" class="link" :points="l" />
            <g v-for="(l, i) in c.levels" :key="'v' + i" class="level" :class="l.kind">
              <line :x1="l.x1" :x2="l.x2" :y1="l.y" :y2="l.y" />
              <rect v-if="l.t" :x="l.bx" :y="l.by - (c.id === 'es' ? 11 : 7)" :width="l.bw" :height="c.id === 'es' ? 22 : 14" />
              <text v-if="l.t" :x="l.bx + 2" :y="l.by + c.noteDrop">{{ l.t }}</text>
            </g>
            <polyline v-for="(l, i) in c.legs" :key="'l' + i" class="leg" :class="l.kind" :points="l.pts" />
            <line v-for="(m, i) in c.bars3" :key="'m' + i" class="marker" :x1="m.x1" :x2="m.x2" :y1="m.y" :y2="m.y" />
            <text v-for="(n, i) in c.notes" :key="'n' + i" class="note" :class="n.kind" :x="n.x" :y="n.y">{{ n.t }}</text>
            <path v-for="(a, i) in c.arrows" :key="'a' + i" class="arrow" :d="a" />
            <g v-for="(s, i) in c.stars" :key="'s' + i" class="star" :transform="`translate(${s.x} ${s.y})`">
              <circle r="4" />
              <path d="M0-4v-4M0 4v4M-4 0h-4M4 0h4M-3-3l-2-2M3-3l2-2M-3 3l-2 2M3 3l2 2" />
            </g>
            <path v-if="c.id === 'es'" class="back" d="M1984 42h-17M1974 35l-7 7 7 7" />
            <path v-if="c.crossX" class="cross" :d="`M${c.crossX + 0.5} ${c.bounds[0]}V${c.bounds[1]}M${c.left} ${c.crossY - 0.5}H${c.axis}`" />
            <path class="edge" :d="`M${c.axis - 0.5} ${c.bounds[0]}V${c.bounds[1]}M${c.left} ${c.bounds[1] - 0.5}H${c.right}`" />
            <g v-for="(a, i) in c.priceAxis" :key="'p' + i" :class="a.kind ? 'tag ' + a.kind : 'tick'">
              <polygon v-if="a.kind" :points="`${c.axis - 6},${a.y} ${c.axis},${a.y - 6} ${c.right - 1},${a.y - 6} ${c.right - 1},${a.y + 7} ${c.axis},${a.y + 7}`" />
              <path v-else :d="`M${c.axis} ${Math.round(a.y) - 0.5}h5`" />
              <text :x="c.axis + 7" :y="a.y + 3">{{ a.t }}</text>
            </g>
          </svg>

          <svg v-for="(p, k) in c.panes" :key="p.title" class="pane" :viewBox="p.box">
            <rect class="band" :x="c.left" :y="p.band[0]" :width="c.axis - c.left - 1" :height="p.band[1] - p.band[0]" />
            <g class="grid">
              <path v-for="x in c.gridX" :key="'x' + x" :d="`M${x + 0.5} ${p.top}V${p.bottom}`" />
              <path v-for="y in p.grid" :key="'y' + y" :d="`M${c.left} ${y + 0.5}H${c.axis}`" />
            </g>
            <path class="mid" :class="p.midKind" :d="`M${c.left} ${p.mid}H${c.axis - 2}`" />
            <polyline v-if="p.under" class="series" :class="p.tone" :points="p.line" />
            <line v-for="(r, i) in p.rules" :key="'r' + i" class="rule" :class="r.kind" :x1="r.x1" :x2="r.x2" :y1="r.y" :y2="r.y" />
            <polyline v-if="!p.under" class="series" :class="p.tone" :points="p.line" />
            <text class="label" :x="c.titleX" :y="p.titleY">{{ p.title }}</text>
            <text v-if="k === 2" class="label" :x="c.titleX" :y="c.copyY">© 2023 NinjaTrader, LLC</text>
            <line v-for="(d, i) in p.dashes" :key="'d' + i" class="dash" :x1="d.x1" :x2="d.x2" :y1="d.y" :y2="d.y" />
            <path v-if="c.crossX" class="cross" :d="`M${c.crossX + 0.5} ${p.top}V${k === 2 ? p.bottom - 2 : p.bottom}`" />
            <path class="edge" :d="`M${c.axis - 0.5} ${p.top}V${p.bottom}M${c.left} ${p.bottom - 0.5}H${k === 2 ? c.axis : c.right}`" />
            <g v-for="(a, i) in p.axisLabels" :key="'p' + i" :class="a.kind ? 'tag ' + a.kind : 'tick'">
              <polygon v-if="a.kind" :points="`${c.axis - 6},${a.y} ${c.axis},${a.y - 6} ${c.right - 1},${a.y - 6} ${c.right - 1},${a.y + 6} ${c.axis},${a.y + 6}`" />
              <path v-else :d="`M${c.axis} ${Math.round(a.y) - 0.5}h5`" />
              <text :x="c.axis + 7" :y="a.y + 3">{{ a.t }}</text>
            </g>
          </svg>

          <svg class="pane" :viewBox="c.boxes[4]">
            <g v-for="d in c.dates" :key="d.x" class="date">
              <path :d="`M${Math.round(d.x) + 0.5} ${c.bounds[4]}v4`" />
              <text :x="d.x" :y="c.bounds[4] + 17">{{ d.t }}</text>
            </g>
            <g v-if="c.crossX" class="clock-tag">
              <rect :x="c.crossX - 13.5" :y="c.bounds[4] + 5.5" width="27" height="16" />
              <text :x="c.crossX" :y="c.bounds[4] + 17">15:00</text>
            </g>
          </svg>

          <div class="scroll">
            <button aria-label="Scroll left"><svg viewBox="0 0 8 10"><path d="M5 3v4L3 5z" /></svg></button>
            <div class="gap"></div>
            <div class="thumb"></div>
            <button aria-label="Scroll right"><svg viewBox="0 0 8 10"><path d="M3 3v4l2-2z" /></svg></button>
          </div>
        </div>

        <footer class="tabs">
          <button class="tab">{{ c.symbol }}</button>
          <button class="add" aria-label="Add tab"><svg viewBox="0 0 10 10"><path d="M5 0v10M0 5h10" /></svg></button>
        </footer>
      </section>

      <footer v-if="c.id === 'es'" class="taskbar">
        <button aria-label="Start" class="start">
          <svg viewBox="0 0 18 18">
            <defs><linearGradient id="win" x1="0" y1="0" x2="1" y2="1"><stop offset="0" stop-color="#8be8ff" /><stop offset="1" stop-color="#1290e8" /></linearGradient></defs>
            <path fill="url(#win)" d="M0 0h8.600v8.600H0zM9.400 0H18v8.600H9.400zM0 9.400h8.600V18H0zM9.400 9.400H18V18H9.400z" />
          </svg>
        </button>
        <button class="search">
          <svg viewBox="0 0 12 12"><circle cx="5" cy="5" r="4" /><path d="M8 8l3 3" /></svg>Search
        </button>
        <button aria-label="Task view"><svg viewBox="0 0 20 18"><rect x="0" y="5" width="13" height="12" fill="#6d6a70" /><rect x="5" y="1" width="14" height="12" fill="#f2f2f4" /><rect x="5" y="5" width="8" height="8" fill="#b9b7bb" /></svg></button>
        <button class="weather" aria-label="Weather">
          <svg viewBox="0 0 20 18"><path d="M13 4c1 6-5 10-13 6c2 6 8 8 13 6c5-2 6-8 0-12z" fill="#f6a233" /></svg>
          <span>22°</span>
        </button>
        <button aria-label="Chat"><svg viewBox="0 0 20 20"><path d="M10 1a9 9 0 1 1-4 17l-4 1 1-4A9 9 0 0 1 10 1z" fill="#7272d6" /><rect x="5" y="7" width="7" height="7" rx="1" fill="#fff" /><path d="M12.500 10L16 7.500v6z" fill="#fff" /></svg></button>
        <button aria-label="Files"><svg viewBox="0 0 20 18"><path d="M0 1h7l2 2h11v15H0z" fill="#e6a520" /><path d="M0 5h20v12H0z" fill="#ffd35c" /><path d="M4 18v-4q0-2 2-2h8q2 0 2 2v4z" fill="#1c84d6" /></svg></button>
        <button class="open" aria-label="Browser">
          <svg viewBox="0 0 20 20"><circle cx="10" cy="10" r="9.500" fill="#fbc116" /><path d="M10 10L1.800 5.200A9.500 9.500 0 0 1 18.500 5.500H10z" fill="#e33b2e" /><path d="M1.800 5.200A9.500 9.500 0 0 0 9 19.500l4-7L10 10z" fill="#2da94f" /><circle cx="10" cy="10" r="4.600" fill="#fff" /><circle cx="10" cy="10" r="3.600" fill="#2b7de9" /></svg>
        </button>
        <button class="open current" aria-label="Trading platform">
          <svg viewBox="0 0 22 20"><path d="M1 16C1 9 4 4 9 3c3 3 4 8 4 14-2-1-3-4-4-8-1 3-4 6-8 7z" fill="#8e8580" /><path d="M11 4c3 2 4 6 5 9 1-3 1-6 0-9 5 3 6 9 1 14-4-2-6-8-6-14z" fill="#d01c20" /></svg>
        </button>
        <button class="open sse" aria-label="SSE">sse</button>
        <div class="tray">
          <svg viewBox="0 0 12 12"><path d="M1 9l5-5 5 5" /></svg>
          <svg viewBox="0 0 16 16"><path d="M10 2H2v10h12V8M5 15h7M8 12v3M11 1h4v4q0 2-2 2t-2-2z" /></svg>
          <svg viewBox="0 0 16 16"><path d="M1 6h3l4-4v12l-4-4H1zM10 6q1 2 0 4M12 4q3 4 0 8M14 2q3 6 0 12" /></svg>
          <time>11:04 AM<br>1/18/2023</time>
        </div>
      </footer>
    </div>
  </div>
</template>

<style>
body {
  margin: 0;
  background: #2d2d30;
}
</style>

<style scoped>
.desktop {
  display: flex;
  font-family: "Liberation Sans", Arial, sans-serif;
  background: #2d2d30;
  overflow: hidden;
}
.side {
  flex: 1 1 0;
  min-width: 0;
}
button,
select {
  font-family: inherit;
  border: 0;
  margin: 0;
  padding: 0;
  background: none;
  color: inherit;
}
.window {
  display: flex;
  flex-direction: column;
  background: #2d2d30;
}
.window.es {
  box-shadow: inset -1px -1px #434346, inset 1px 0 #3f3f42;
}

/* toolbar */
.toolbar {
  display: flex;
  align-items: center;
  height: 19px;
  background: linear-gradient(#515151, #484848);
  border-bottom: 1px solid #3f3f46;
  box-sizing: border-box;
  padding-left: 1px;
  padding-right: 3px;
}
.nq .toolbar {
  height: 18px;
  padding-left: 0;
  padding-right: 1px;
  background: #1e1e1e;
}
.brand {
  margin: 0 15px 0 0;
  width: 38px;
  height: 100%;
  display: flex;
  align-items: center;
  justify-content: center;
  font-size: 12px;
  font-weight: 400;
  color: #fff;
  background: linear-gradient(#a2171f, #771319);
}
.nq .brand {
  margin-right: 14px;
}
.pick {
  position: relative;
  width: 100px;
  height: 15px;
  margin-right: 5px;
}
.pick select {
  appearance: none;
  display: block;
  width: 100%;
  height: 15px;
  padding: 0 5px;
  background: #3f3f46;
  color: #d4d4d4;
  font-size: 10px;
  line-height: 15px;
}
.pick svg {
  position: absolute;
  right: 5px;
  top: 5px;
  width: 8px;
  height: 6px;
  fill: none;
  stroke: #d8d8d8;
  stroke-width: 2;
}
.tools {
  display: flex;
  gap: 8px;
  margin-left: 5px;
}
.tools button {
  width: 14px;
  height: 14px;
  color: #d8d8d8;
}
.tools button.dim {
  color: #6a6a6a;
}
.tools svg {
  display: block;
  width: 14px;
  height: 14px;
}
.ln {
  fill: none;
  stroke: currentColor;
  stroke-width: 1.2;
}
.sd {
  fill: currentColor;
}
.controls {
  display: flex;
  gap: 2px;
  margin-left: auto;
}
.controls button {
  width: 13px;
  height: 13px;
  box-sizing: border-box;
  border: 1px solid #cfcfcf;
  color: #d8d8d8;
}
.controls .blank {
  background: linear-gradient(#c9c5c5, #a19d9d);
}
.controls button svg {
  display: block;
  width: 11px;
  height: 11px;
  margin: auto;
  fill: none;
  stroke: currentColor;
  stroke-width: 2;
}
.nq .close {
  background: #a8262b;
  color: #fff;
}

/* chart */
.frame {
  margin: 5px 6px 0;
  border-top: 1px solid #3f3f46;
  background: #212121;
}
.nq .frame {
  margin: 3px 4px 0;
}
.pane {
  display: block;
  width: 100%;
  height: auto;
}
text {
  font-size: 9px;
  fill: #d8d8d8;
}
.grid path {
  stroke: #fff;
  stroke-opacity: 0.06;
  fill: none;
}
.label {
  font-size: 8px;
  fill: #e4e4e4;
}
.faint {
  font-size: 8px;
  fill: #696969;
}
.large {
  font-size: 10px;
}
.end {
  text-anchor: end;
}
.wick {
  stroke: #bcbcbc;
  fill: none;
  shape-rendering: crispEdges;
}
.up,
.down {
  stroke: #c0c0c0;
  shape-rendering: crispEdges;
}
.up {
  fill: #32cd32;
}
.down {
  fill: #f00;
}
.fill.red {
  fill: #f00;
  fill-opacity: 0.12;
}
.fill.green {
  fill: #008000;
  fill-opacity: 0.12;
}
.average {
  fill: none;
  stroke: #1e90ff;
}
.link {
  fill: none;
  stroke: #808080;
  stroke-opacity: 0.8;
  stroke-dasharray: 2 1;
}
.leg {
  fill: none;
  stroke-width: 2;
}
.leg.red {
  stroke: #f00;
}
.leg.green {
  stroke: #008000;
}
.marker {
  stroke: #f00;
  stroke-width: 3;
}
.level line {
  stroke-width: 2;
  stroke-dasharray: 5 1;
}
.nq .level line {
  stroke-dasharray: 5 2;
}
.level rect {
  fill-opacity: 0.22;
}
.level text {
  font-size: 16px;
}
.nq .level text {
  font-size: 10px;
}
.level.green line {
  stroke: #008000;
}
.level.green rect {
  fill: #008000;
}
.level.green text {
  fill: #008000;
}
.level.red line {
  stroke: #f00;
}
.level.red rect {
  fill: #f00;
}
.level.red text {
  fill: #f00;
}
.note {
  text-anchor: middle;
  font-size: 16px;
  fill: #ff0;
}
.nq .note {
  font-size: 10px;
  fill: #00008b;
}
.es .name,
.nq .name {
  fill: #f00;
}
.nq .ratio {
  font-size: 7px;
  fill: #00f;
}
.arrow {
  fill: #fff;
}
.star {
  fill: none;
  stroke: #f0f;
}
.back {
  fill: none;
  stroke: #e0e0e0;
  stroke-width: 2;
}
.cross {
  stroke: #d0d0d0;
  fill: none;
}
.edge {
  stroke: #d0d0d0;
  fill: none;
}
.tick path,
.date path {
  stroke: #d0d0d0;
  fill: none;
}
.tag polygon {
  stroke: #c8c8c8;
}
.tag text {
  fill: #fff;
}
.tag.sky polygon {
  fill: #1e90ff;
}
.tag.black polygon {
  fill: #000;
}
.tag.slate polygon {
  fill: #3f3f46;
}
.tag.blue polygon {
  fill: #00f;
}
.tag.red polygon {
  fill: #f00;
}
.tag.teal polygon {
  fill: #008b8b;
}
.tag.yellow polygon {
  fill: #ff0;
}
.tag.gray polygon {
  fill: #808080;
}
.tag.yellow text,
.tag.gray text {
  fill: #000;
}
.band {
  fill: #3e3e3e;
}
.mid {
  fill: none;
  stroke-dasharray: 1 1;
}
.mid.white {
  stroke: #fff;
}
.mid.aqua {
  stroke: #48d1cc;
}
.mid.navy {
  stroke: #0000a8;
}
.series {
  fill: none;
  stroke-width: 2;
}
.series.yellow {
  stroke: #ff0;
}
.series.teal {
  stroke: #008b8b;
}
.rule {
  stroke-width: 3;
}
.rule.gray {
  stroke: #8a8a8a;
  stroke-width: 1;
}
.rule.blue {
  stroke: #00f;
}
.rule.red {
  stroke: #f00;
}
.rule.green {
  stroke: #008000;
}
.rule.aqua {
  stroke: #48d1cc;
  stroke-width: 4;
}
.dash {
  stroke: #808080;
  stroke-width: 2;
  stroke-dasharray: 5 2;
}
.date text,
.clock-tag text {
  text-anchor: middle;
}
.clock-tag rect {
  fill: #3f3f46;
  stroke: #d0d0d0;
}
.clock-tag text {
  fill: #fff;
}

/* scroll bar and tabs */
.scroll {
  display: flex;
  height: 11px;
  background: #333;
  border-bottom: 1px solid #3f3f46;
  box-sizing: border-box;
}
.scroll button {
  width: 8px;
  background: #000;
}
.scroll svg {
  display: block;
  width: 8px;
  height: 10px;
  fill: #fff;
}
.gap {
  flex: 1106 1 0;
}
.thumb {
  flex: 913 1 0;
  border: 1px solid #7a7a7a;
  background: linear-gradient(#626262 40%, #3a3a3a 60%);
  box-sizing: border-box;
}
.nq .gap {
  flex-grow: 1581;
}
.nq .thumb {
  flex-grow: 443;
}
.tabs {
  display: flex;
  align-items: flex-start;
  height: 26px;
  padding-left: 22px;
}
.nq .tabs {
  height: 23px;
  padding-left: 19px;
}
.tab {
  width: 59px;
  height: 19px;
  padding-left: 5px;
  box-sizing: border-box;
  border: 1px solid #1874bd;
  border-top: 0;
  background: #212121;
  color: #1c82d4;
  font-size: 10px;
  text-align: left;
}
.add {
  width: 18px;
  height: 17px;
  background: #3f3f46;
}
.add svg {
  display: block;
  width: 9px;
  height: 9px;
  margin: auto;
  stroke: #e0e0e0;
  stroke-width: 2;
}

/* taskbar */
.taskbar {
  display: flex;
  align-items: center;
  gap: 17px;
  height: 38px;
  padding: 0 15px 0 17px;
  box-sizing: border-box;
  font-family: "Open Sans", "Noto Sans", sans-serif;
  font-size: 9px;
  line-height: 15px;
  color: #fff;
  background: linear-gradient(90deg, #231c2e 0%, #251a33 20%, #2f1a38 36%, #37231c 48%, #43171d 58%, #481213 68%, #3d1a17 80%, #2f1c1b 100%);
}
.taskbar > button {
  width: 18px;
  height: 26px;
  display: flex;
  align-items: center;
  justify-content: center;
  flex: none;
  position: relative;
}
.taskbar > button > svg {
  width: 18px;
  height: 18px;
  flex: none;
}
.taskbar .start {
  margin-right: -5px;
}
.taskbar .search {
  width: 79px;
  margin-right: -6px;
  gap: 4px;
  border-radius: 13px;
  background: #322b3b;
  font-size: 9px;
}
.taskbar .search svg {
  width: 12px;
  height: 12px;
  fill: none;
  stroke: #fff;
}
.weather span {
  position: absolute;
  left: 5px;
  top: -3px;
  padding: 0 3px;
  border-radius: 7px;
  background: #2a2a2e;
  font-size: 9px;
  line-height: 13px;
}
.open::after {
  content: "";
  position: absolute;
  left: 7px;
  bottom: -5px;
  width: 4px;
  height: 2px;
  border-radius: 1px;
  background: #9a969c;
}
.taskbar .current {
  width: 30px;
  height: 32px;
  margin: 0 -6px;
  border-radius: 3px;
  background: #3b3245;
}
.current::after {
  left: 9px;
  bottom: 0;
  width: 12px;
  background: #d99be0;
}
.taskbar .sse {
  height: 18px;
  border-radius: 2px;
  background: #000;
  font-size: 10px;
  font-weight: 700;
}
.sse::after {
  bottom: -9px;
}
.tray {
  display: flex;
  align-items: center;
  gap: 7px;
  margin-left: auto;
}
.tray svg {
  width: 13px;
  height: 13px;
  fill: none;
  stroke: #fff;
}
.tray time {
  margin-left: 5px;
  text-align: right;
}
</style>
